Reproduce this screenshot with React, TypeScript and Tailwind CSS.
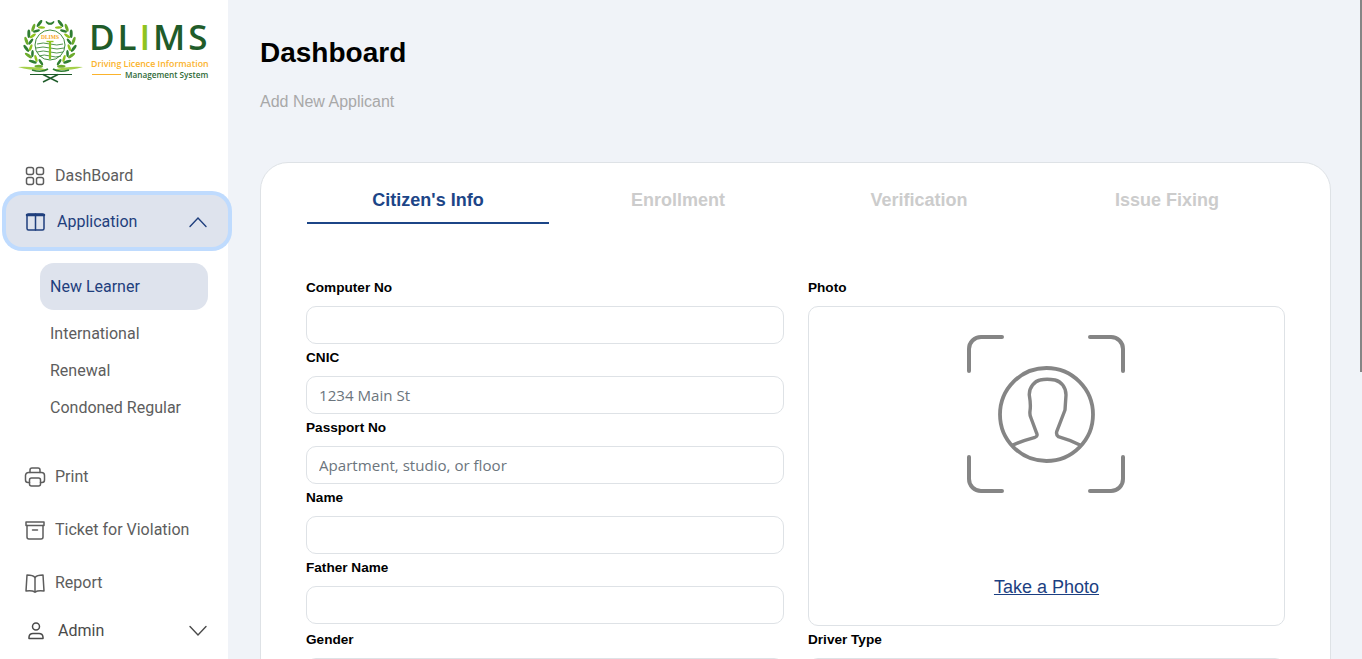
const leafAngles = [-62, -44, -26, -8, 10, 28, 46, 64];

function Emblem() {
  const cx = 32;
  const cy = 25;
  return (
    <svg width="66" height="64" viewBox="0 0 66 64" className="shrink-0">
      {/* crescent on top */}
      <path d="M28 1.500a4.300 4.300 0 0 0 8 0a5.200 5.200 0 0 1-8 0z" fill="#2f7d32" stroke="#2f7d32" strokeWidth="1.200" />
      {/* laurel */}
      {leafAngles.map((deg, i) => {
        const t = (deg * Math.PI) / 180;
        return [1, -1].map((side) => {
          const outerX = cx + side * Math.cos(t) * 24;
          const outerY = cy - Math.sin(t) * 24;
          const innerX = cx + side * Math.cos(t) * 19.500;
          const innerY = cy - Math.sin(t) * 19.500;
          const rot = side * (90 - deg);
          return (
            <g key={`${deg}${side}`}>
              <ellipse cx={outerX} cy={outerY} rx="4.200" ry="1.500" transform={`rotate(${rot + side * 28} ${outerX} ${outerY})`} fill={i % 2 ? "#2f7d32" : "#6cab2c"} />
              <ellipse cx={innerX} cy={innerY} rx="3.600" ry="1.300" transform={`rotate(${rot - side * 28} ${innerX} ${innerY})`} fill={i % 2 ? "#8fc31f" : "#2f7d32"} />
            </g>
          );
        });
      })}
      <circle cx={cx} cy={cy} r="15" fill="#fff" stroke="#3f8a3a" strokeWidth="1" />
      {/* water lines + minar */}
      <path d="M19 24q6-2 13 0t13 0M18 28q7-2 14 0t14 0M19 32q6-2 13 0t13 0M21 36q5-2 11 0t11 0" stroke="#3f8a3a" strokeWidth="0.900" fill="none" />
      <path d="M32 22V39" stroke="#8fc31f" strokeWidth="2.200" />
      <path d="M28.500 21.500h7" stroke="#8fc31f" strokeWidth="1.400" />
      <text x={cx} y="19" textAnchor="middle" fontSize="5.500" fontWeight="700" fill="#f7a823" fontFamily="Liberation Serif, serif">DLIMS</text>
      {/* bottom swoosh */}
      <path d="M0 47Q16 46 30 50Q14 51 0 47zM65 47Q49 46 35 50Q51 51 65 47z" fill="#a5d04a" />
      <path d="M14 50Q24 53 30 49M51 50Q41 53 35 49" stroke="#2f7d32" strokeWidth="1.600" fill="none" />
      <path d="M12 54.500H54" stroke="#1f5c2a" strokeWidth="1.200" />
      <path d="M25 62L40 54.500M40 62L25 54.500" stroke="#1f5c2a" strokeWidth="1.400" />
    </svg>
  );
}

function Logo() {
  return (
    <div className="flex h-[108px] items-start pl-[18px] pt-[20px]">
      <Emblem />
      <div className="ml-[5px] flex w-[124px] flex-col font-['Open_Sans',sans-serif]">
        <div className="-mt-[1px] h-[35px] text-[35px] leading-[35px] font-semibold tracking-[2.900px] whitespace-nowrap text-[#1f5c2a]">
          DL<span className="text-[#8fc31f]">I</span>MS
        </div>
        <div className="mt-[4px] ml-[2px] text-[8.800px] leading-[12px] font-semibold whitespace-nowrap text-[#fbb32c]">
          Driving Licence Information
        </div>
        <div className="ml-[3px] flex items-center gap-[4px]">
          <div className="h-px w-[29px] bg-[#fbb32c]" />
          <div className="text-[8.200px] leading-[9px] font-semibold whitespace-nowrap text-[#2f6b38]">Management System</div>
        </div>
      </div>
    </div>
  );
}

function Icon({ children, className }: { children: React.ReactNode; className?: string }) {
  return (
    <svg width="22" height="22" viewBox="0 0 22 22" fill="none" stroke="currentColor" strokeWidth="1.500" strokeLinecap="round" strokeLinejoin="round" className={className}>
      {children}
    </svg>
  );
}

function Chevron({ up }: { up?: boolean }) {
  return (
    <svg width="18" height="12" viewBox="0 0 18 12" fill="none" stroke="currentColor" strokeWidth="1.400" strokeLinecap="round" className="shrink-0">
      <path d={up ? "M1 10.500L9 2L17 10.500" : "M1 1.500L9 10L17 1.500"} />
    </svg>
  );
}

function NavItem({ icon, label, className }: { icon: React.ReactNode; label: string; className: string }) {
  return (
    <div className={`flex items-center pl-[24px] text-[#5d5d5d] ${className}`}>
      <span className="w-[31px]">{icon}</span>
      <span className="text-[16px] leading-[20px]">{label}</span>
    </div>
  );
}

function Sidebar() {
  return (
    <aside className="relative z-10 h-full w-[228px] shrink-0 bg-white font-['Roboto',sans-serif]">
      <Logo />
      <NavItem
        className="mt-[58px] h-[20px]"
        label="DashBoard"
        icon={
          <Icon>
            <rect x="2.500" y="2.500" width="7" height="7" rx="2" />
            <rect x="12.500" y="2.500" width="7" height="7" rx="2" />
            <rect x="2.500" y="12.500" width="7" height="7" rx="2" />
            <rect x="12.500" y="12.500" width="7" height="7" rx="2" />
          </Icon>
        }
      />
      <div className="mt-[9px] ml-[6px] flex h-[52px] w-[222px] items-center rounded-[16px] bg-[#dee3ed] pt-[1px] pr-[21px] pl-[19px] text-[#1f3f7d] ring-4 ring-[#bfdbfe]">
        <Icon className="shrink-0">
          <rect x="2" y="3" width="17" height="16" rx="1.500" />
          <path d="M2 4h17" strokeWidth="2.500" />
          <path d="M10.500 3v16" />
        </Icon>
        <span className="ml-[10px] flex-1 text-[16px] leading-[20px]">Application</span>
        <Chevron up />
      </div>
      <div className="mt-[16px] ml-[40px] flex h-[47px] w-[168px] items-center rounded-[14px] bg-[#dee3ed] pl-[10px] text-[16px] text-[#1f3f7d]">
        New Learner
      </div>
      <div className="mt-[14px] flex flex-col gap-[17px] pl-[50px] text-[16px] leading-[20px] text-[#5d5d5d]">
        <div>International</div>
        <div>Renewal</div>
        <div>Condoned Regular</div>
      </div>
      <NavItem
        className="mt-[49px] h-[20px]"
        label="Print"
        icon={
          <Icon>
            <path d="M6 6.500V4a2 2 0 0 1 2-2h6a2 2 0 0 1 2 2v2.500" />
            <path d="M5.500 16.500H4a2.500 2.500 0 0 1-2.500-2.500v-4.500A3 3 0 0 1 4.500 6.500h13a3 3 0 0 1 3 3V14a2.500 2.500 0 0 1-2.500 2.500h-1.500" />
            <rect x="5.500" y="12" width="11" height="8" rx="2" />
          </Icon>
        }
      />
      <NavItem
        className="mt-[33px] h-[20px]"
        label="Ticket for Violation"
        icon={
          <Icon>
            <path d="M2 3h18v3.500H2z" />
            <path d="M3 6.500V18a2 2 0 0 0 2 2h12a2 2 0 0 0 2-2V6.500" />
            <path d="M8.500 11h5" />
          </Icon>
        }
      />
      <NavItem
        className="mt-[33px] h-[20px]"
        label="Report"
        icon={
          <Icon>
            <path d="M11 5.500C9.500 3.500 6.500 3 3 3L2 19c3-.5 6.500-.5 9 1c2.500-1.500 6-1.500 9-1L19 3C15.500 3 12.500 3.500 11 5.500z" />
            <path d="M11 5.500V20" />
          </Icon>
        }
      />
      <div className="mt-[28px] flex h-[20px] items-center pr-[21px] pl-[25px] text-[#4a4a4a]">
        <Icon className="shrink-0">
          <circle cx="11" cy="6.500" r="3.500" />
          <path d="M4 18.500v-1.500a4 4 0 0 1 4-3.500h6a4 4 0 0 1 4 3.500v1.500z" />
        </Icon>
        <span className="ml-[11px] flex-1 text-[16px] leading-[20px]">Admin</span>
        <Chevron />
      </div>
    </aside>
  );
}

function Field({ label, placeholder, className }: { label: string; placeholder?: string; className?: string }) {
  return (
    <div className={className}>
      <div className="mb-[8px] pt-[4px] text-[13.600px] leading-[20px] font-bold text-black">{label}</div>
      <Input placeholder={placeholder} />
    </div>
  );
}

function Input({ placeholder }: { placeholder?: string }) {
  return (
    <input
      readOnly
      placeholder={placeholder}
      className="block h-[38px] w-full rounded-[10px] border border-[#dee2e6] bg-white px-[12px] font-['Open_Sans',sans-serif] text-[15.100px] outline-none placeholder:text-[#6c757d]"
    />
  );
}

function PhotoGlyph() {
  return (
    <svg width="158" height="158" viewBox="0 0 158 158" fill="none" stroke="#858585" strokeWidth="4" strokeLinecap="round" className="-ml-[2px]">
      <path d="M2 36V14a12 12 0 0 1 12-12H35" />
      <path d="M156 36V14a12 12 0 0 0-12-12H123" />
      <path d="M2 122v22a12 12 0 0 0 12 12H35" />
      <path d="M156 122v22a12 12 0 0 1-12 12H123" />
      <circle cx="79.500" cy="79.500" r="46.500" strokeWidth="3.800" />
      <path
        d="M45.700 110Q56 105.500 68 102.300Q71 101 69.700 98.300L64 83Q62.500 80 63 76Q64 70 62.300 60C62 52 68 46 73 45Q79.700 43.500 88 45C94 46.500 99 52 99 60Q98.500 68 98 75L89.700 96.700Q89 100 91.300 101.700Q103 105 113 110"
        strokeWidth="3.400"
        strokeLinejoin="round"
      />
    </svg>
  );
}

function Card() {
  return (
    <div className="mt-[50px] rounded-t-[28px] border border-[#dee2e6] bg-white px-[45px] pt-[19px] pb-[40px]">
      <div className="grid grid-cols-[242px_258px_224px_272px] pl-[1px] text-center text-[18px] leading-[36px] font-bold text-[#cccccc]">
        <div className="h-[42px] border-b-2 border-[#1c4587] text-[#1c4587]">Citizen's Info</div>
        <div>Enrollment</div>
        <div>Verification</div>
        <div>Issue Fixing</div>
      </div>
      <div className="mt-[50px] grid grid-cols-[478px_477px] gap-x-[24px]">
        <div>
          <Field label="Computer No" />
          <Field label="CNIC" placeholder="1234 Main St" />
          <Field label="Passport No" placeholder="Apartment, studio, or floor" />
          <Field label="Name" />
          <Field label="Father Name" />
          <Field label="Gender" className="mt-[2px]" />
        </div>
        <div>
          <div className="mb-[8px] pt-[4px] text-[13.600px] leading-[20px] font-bold text-black">Photo</div>
          <div className="flex h-[320px] flex-col items-center rounded-[10px] border border-[#dee2e6] pt-[28px]">
            <PhotoGlyph />
            <a className="mt-[82px] text-[18px] leading-[24px] text-[#1c3f82] underline">Take a Photo</a>
          </div>
          <Field label="Driver Type" />
        </div>
      </div>
    </div>
  );
}

export default function App() {
  return (
    <div className="relative flex h-[659px] overflow-hidden bg-[#f0f3f8] font-['Liberation_Sans',sans-serif]">
      <Sidebar />
      <main className="min-w-0 flex-1 pr-[31px] pl-[32px]">
        <h1 className="pt-[36px] text-[28px] leading-[34px] font-bold text-black">Dashboard</h1>
        <p className="mt-[22px] text-[16px] leading-[20px] text-[#a8a8a8]">Add New Applicant</p>
        <Card />
      </main>
      {/* page scrollbar thumb */}
      <div className="absolute top-0 right-0 h-[372px] w-[2px] bg-[#858585]" />
    </div>
  );
}
